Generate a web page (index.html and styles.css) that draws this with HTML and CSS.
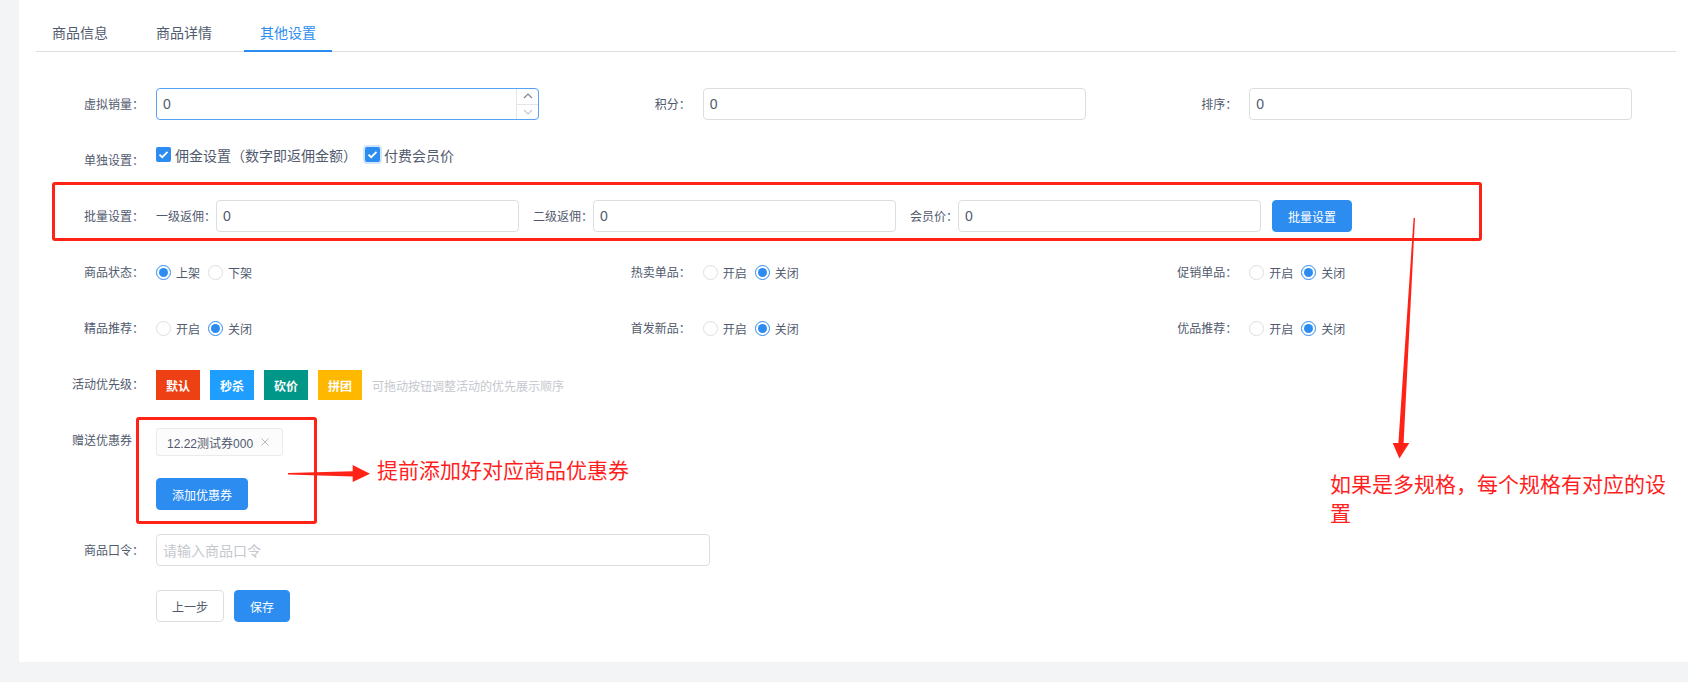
FILE: index.html
```html
<!DOCTYPE html>
<html lang="zh-CN">
<head>
<meta charset="utf-8">
<title>其他设置</title>
<link rel="stylesheet" href="styles.css">
</head>
<body>
<div class="panel">
  <div class="tabs">
    <div class="tab">商品信息</div>
    <div class="tab">商品详情</div>
    <div class="tab active">其他设置</div>
  </div>

  <div class="form">
    <div class="grid3">
      <div class="item">
        <div class="lbl">虚拟销量：</div>
        <div class="input focus">
          <span class="val">0</span>
          <span class="spin">
            <span class="spin-up"><svg width="10" height="6" viewBox="0 0 10 6"><path d="M1 5 L5 1 L9 5" fill="none" stroke="#808695" stroke-width="1.2"/></svg></span>
            <span class="spin-down"><svg width="10" height="6" viewBox="0 0 10 6"><path d="M1 1 L5 5 L9 1" fill="none" stroke="#c5c8ce" stroke-width="1.2"/></svg></span>
          </span>
        </div>
      </div>
      <div class="item">
        <div class="lbl">积分：</div>
        <div class="input"><span class="val">0</span></div>
      </div>
      <div class="item">
        <div class="lbl">排序：</div>
        <div class="input"><span class="val">0</span></div>
      </div>
    </div>

    <div class="item">
      <div class="lbl">单独设置：</div>
      <div class="checks">
        <div class="cb">
          <span class="box"><svg width="11" height="9" viewBox="0 0 11 9"><path d="M1.5 4.6 L4.2 7.2 L9.5 1.8" fill="none" stroke="#fff" stroke-width="1.8"/></svg></span>
          <span>佣金设置（数字即返佣金额）</span>
        </div>
        <div class="cb">
          <span class="box focus"><svg width="11" height="9" viewBox="0 0 11 9"><path d="M1.5 4.6 L4.2 7.2 L9.5 1.8" fill="none" stroke="#fff" stroke-width="1.8"/></svg></span>
          <span>付费会员价</span>
        </div>
      </div>
    </div>

    <div class="item">
      <div class="lbl">批量设置：</div>
      <div class="batch">
        <span class="sub">一级返佣：</span>
        <div class="input small"><span class="val">0</span></div>
        <span class="sub">二级返佣：</span>
        <div class="input small"><span class="val">0</span></div>
        <span class="sub">会员价：</span>
        <div class="input small"><span class="val">0</span></div>
        <span class="btn primary batch-btn">批量设置</span>
      </div>
    </div>

    <div class="grid3">
      <div class="item">
        <div class="lbl">商品状态：</div>
        <div class="radios">
          <span class="radio"><span class="dot on"></span>上架</span>
          <span class="radio"><span class="dot"></span>下架</span>
        </div>
      </div>
      <div class="item">
        <div class="lbl">热卖单品：</div>
        <div class="radios">
          <span class="radio"><span class="dot"></span>开启</span>
          <span class="radio"><span class="dot on"></span>关闭</span>
        </div>
      </div>
      <div class="item">
        <div class="lbl">促销单品：</div>
        <div class="radios">
          <span class="radio"><span class="dot"></span>开启</span>
          <span class="radio"><span class="dot on"></span>关闭</span>
        </div>
      </div>
    </div>

    <div class="grid3">
      <div class="item">
        <div class="lbl">精品推荐：</div>
        <div class="radios">
          <span class="radio"><span class="dot"></span>开启</span>
          <span class="radio"><span class="dot on"></span>关闭</span>
        </div>
      </div>
      <div class="item">
        <div class="lbl">首发新品：</div>
        <div class="radios">
          <span class="radio"><span class="dot"></span>开启</span>
          <span class="radio"><span class="dot on"></span>关闭</span>
        </div>
      </div>
      <div class="item">
        <div class="lbl">优品推荐：</div>
        <div class="radios">
          <span class="radio"><span class="dot"></span>开启</span>
          <span class="radio"><span class="dot on"></span>关闭</span>
        </div>
      </div>
    </div>

    <div class="item">
      <div class="lbl">活动优先级：</div>
      <div class="acts">
        <span class="act act-red">默认</span>
        <span class="act act-blue">秒杀</span>
        <span class="act act-green">砍价</span>
        <span class="act act-yellow">拼团</span>
        <span class="hint">可拖动按钮调整活动的优先展示顺序</span>
      </div>
    </div>

    <div class="item">
      <div class="lbl lbl-plain">赠送优惠券</div>
      <div class="coupon">
        <div class="tag">12.22测试券000<svg class="tag-x" width="8" height="8" viewBox="0 0 8 8"><path d="M0.5 0.5 L7.5 7.5 M7.5 0.5 L0.5 7.5" stroke="#b8bbc2" stroke-width="1"/></svg></div>
        <div><span class="btn primary add-btn">添加优惠券</span></div>
      </div>
    </div>

    <div class="item">
      <div class="lbl">商品口令：</div>
      <div class="input wide"><span class="ph">请输入商品口令</span></div>
    </div>

    <div class="item">
      <div class="lbl"></div>
      <div class="actions">
        <span class="btn default">上一步</span>
        <span class="btn primary">保存</span>
      </div>
    </div>
  </div>

  <div class="ann-box box-batch"></div>
  <div class="ann-box box-coupon"></div>
  <svg class="ann-arrow arrow-down" width="26" height="245" viewBox="0 0 26 245">
    <polygon points="23.6,2 25,2 13.6,227 19.3,227 9.4,242.5 2.7,227 8.4,227" fill="#ff2216"/>
  </svg>
  <svg class="ann-arrow arrow-right" width="86" height="23" viewBox="0 0 86 23">
    <polygon points="2,11 66.7,9.2 66.7,3 84,11.8 66.7,20 66.7,14.6 2,12.4" fill="#ff2216"/>
  </svg>
  <div class="ann-text text-coupon">提前添加好对应商品优惠券</div>
  <div class="ann-text text-spec">如果是多规格，每个规格有对应的设置</div>
</div>
</body>
</html>
```

FILE: styles.css
```css
* {
  box-sizing: border-box;
}

html,
body {
  margin: 0;
  padding: 0;
}

body {
  width: 1688px;
  height: 682px;
  overflow: hidden;
  background: #f3f4f6;
  font-family: "Liberation Sans", "Noto Sans CJK SC", sans-serif;
  font-size: 12px;
  color: #515a6e;
}

.panel {
  position: relative;
  margin-left: 19px;
  height: 662px;
  background: #fff;
  padding: 16px 12px 0 17px;
}

/* tabs */
.tabs {
  display: flex;
  gap: 16px;
  height: 36px;
  border-bottom: 1px solid #dcdee2;
}

.tab {
  position: relative;
  padding: 8px 16px;
  font-size: 14px;
  line-height: 19px;
  color: #515a6e;
}

.tab.active {
  color: #2d8cf0;
}

.tab.active::after {
  content: "";
  position: absolute;
  left: 0;
  right: 0;
  bottom: -1px;
  height: 2px;
  background: #2d8cf0;
}

/* form */
.form {
  margin-top: 36px;
}

.grid3 {
  display: grid;
  grid-template-columns: repeat(3, 1fr);
}

.item {
  display: flex;
  align-items: flex-start;
  margin-bottom: 24px;
}

.lbl {
  flex: none;
  width: 120px;
  height: 32px;
  padding-right: 12px;
  text-align: right;
  font-family: "Noto Sans CJK TC", "Noto Sans CJK SC", sans-serif;
  font-size: 12px;
  line-height: 32px;
  color: #515a6e;
}

.lbl-plain {
  padding-right: 24px;
}

.input {
  position: relative;
  display: flex;
  align-items: center;
  width: 383px;
  height: 32px;
  padding: 0 6px;
  border: 1px solid #dcdee2;
  border-radius: 4px;
  background: #fff;
  font-size: 14px;
  color: #515a6e;
}

.input.focus {
  border-color: #57a3f3;
}

.input.small {
  width: 303px;
}

.input.wide {
  width: 554px;
}

.ph {
  color: #c5c8ce;
}

.spin {
  position: absolute;
  top: 0;
  right: 0;
  bottom: 0;
  width: 22px;
  border-left: 1px solid #e3e5e8;
  display: flex;
  flex-direction: column;
}

.spin-up,
.spin-down {
  flex: 1;
  display: flex;
  align-items: center;
  justify-content: center;
}

.spin-up {
  border-bottom: 1px solid #e3e5e8;
}

/* checkboxes */
.checks {
  display: flex;
  align-items: center;
  height: 21px;
  font-size: 14px;
  color: #515a6e;
}

.cb {
  display: flex;
  align-items: center;
  margin-right: 8px;
}

.cb .box {
  width: 15px;
  height: 15px;
  margin-right: 4px;
  border-radius: 2px;
  background: #2d8cf0;
  display: flex;
  align-items: center;
  justify-content: center;
}

.cb .box.focus {
  box-shadow: 0 0 0 2px rgba(45, 140, 240, 0.22);
}

/* batch */
.batch {
  display: flex;
  align-items: center;
  height: 32px;
}

.sub {
  font-family: "Noto Sans CJK TC", "Noto Sans CJK SC", sans-serif;
  font-size: 12px;
  line-height: 32px;
  white-space: nowrap;
}

.batch .input + .sub {
  margin-left: 14px;
}

.batch-btn {
  margin-left: 11px;
}

/* radios */
.radios {
  display: flex;
  align-items: center;
  height: 32px;
  font-size: 12px;
}

.radio {
  display: flex;
  align-items: center;
  margin-right: 8px;
}

.dot {
  position: relative;
  width: 15px;
  height: 15px;
  margin-right: 5px;
  border: 1px solid #dcdee2;
  border-radius: 50%;
  background: #fff;
}

.dot.on {
  border-color: #2d8cf0;
}

.dot.on::after {
  content: "";
  position: absolute;
  left: 2px;
  top: 2px;
  width: 9px;
  height: 9px;
  border-radius: 50%;
  background: #2d8cf0;
}

/* activity */
.acts {
  display: flex;
  align-items: center;
  gap: 10px;
  margin-top: 2px;
  height: 30px;
}

.act {
  width: 44px;
  height: 30px;
  display: flex;
  align-items: center;
  justify-content: center;
  color: #fff;
  font-size: 12px;
  font-weight: bold;
}

.act-red {
  background: #ed4014;
}

.act-blue {
  background: #1e9fff;
}

.act-green {
  background: #009688;
}

.act-yellow {
  background: #ffb800;
}

.hint {
  color: #c5c8ce;
  font-size: 12px;
}

/* coupon */
.coupon {
  padding-top: 4px;
}

.tag {
  display: flex;
  align-items: center;
  width: 127px;
  height: 28px;
  padding: 0 0 0 10px;
  border: 1px solid #e8eaec;
  border-radius: 3px;
  background: #fcfcfc;
  font-size: 12px;
  color: #515a6e;
}

.tag-x {
  margin-left: 8px;
}

.add-btn {
  margin-top: 22px;
}

/* buttons */
.btn {
  display: inline-flex;
  align-items: center;
  justify-content: center;
  height: 32px;
  padding: 0 15px;
  border: 1px solid transparent;
  border-radius: 4px;
  font-size: 12px;
  white-space: nowrap;
}

.btn.primary {
  background: #2d8cf0;
  border-color: #2d8cf0;
  color: #fff;
}

.btn.default {
  background: #fff;
  border-color: #dcdee2;
  color: #515a6e;
}

.actions {
  display: flex;
  gap: 10px;
}

/* annotations */
.ann-box {
  position: absolute;
  border: 3px solid #ff2216;
  border-radius: 3px;
}

.box-batch {
  left: 33px;
  top: 182px;
  width: 1430px;
  height: 59px;
}

.box-coupon {
  left: 117px;
  top: 417px;
  width: 181px;
  height: 107px;
}

.ann-arrow {
  position: absolute;
}

.arrow-down {
  left: 1371px;
  top: 216px;
}

.arrow-right {
  left: 267px;
  top: 462px;
}

.ann-text {
  position: absolute;
  color: #ff1f1f;
  font-family: "Noto Sans CJK SC", sans-serif;
  font-size: 21px;
  line-height: 29px;
}

.text-coupon {
  left: 358px;
  top: 455px;
  white-space: nowrap;
}

.text-spec {
  left: 1311px;
  top: 469px;
  width: 342px;
}
```
